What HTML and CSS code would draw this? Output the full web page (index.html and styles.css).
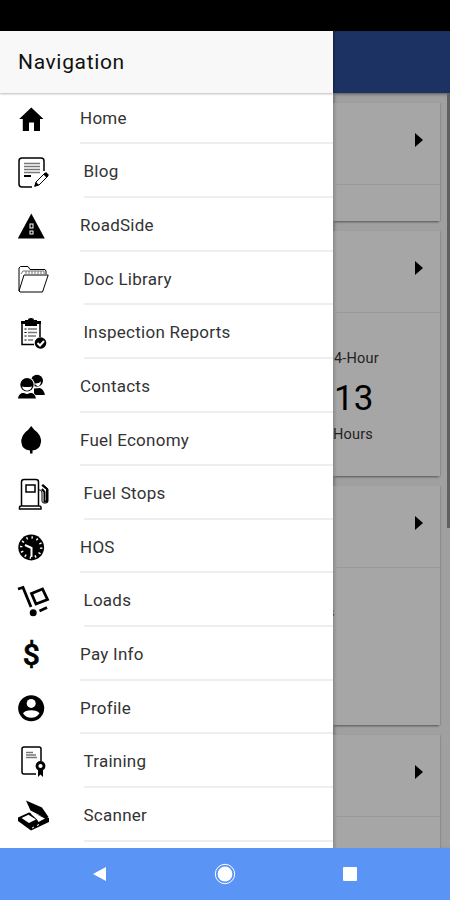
FILE: index.html
```html
<!DOCTYPE html>
<html lang="en">
<head>
    <meta charset="UTF-8" />
    <meta name="viewport" content="width=device-width, initial-scale=1" />
    <title>Navigation</title>
    <link rel="stylesheet" href="styles.css">
</head>
<body>
    <div class="status-bar"></div>

    <div class="screen">
        <nav class="drawer">
            <header class="drawer-header">Navigation</header>
            <ul class="menu">
                <li>
                    <svg viewBox="0 0 34 34"><path d="M15.300 6.500L27.500 18H24V30H18V21.500H13V30H6.800V18H3.200Z" /></svg>
                    <span>Home</span>
                </li>
                <li class="wide">
                    <svg viewBox="0 0 34 34">
                        <path class="mid" d="M16 33H6Q3 33 3 30V7Q3 4 6 4H25Q28 4 28 7V17" />
                        <path class="mid gray" d="M8 9.500H24M8 12.500H24M8 15.500H24M8 18.500H24" />
                        <path class="line" d="M8 22H15" />
                        <path class="thin" d="M19 32L20 28L29 19L32 22L23 31Z" />
                        <path d="M18 33L20 28L23 31ZM27.500 20.500L30 18L33 21L30.500 23.500Z" />
                    </svg>
                    <span>Blog</span>
                </li>
                <li>
                    <svg viewBox="0 0 34 34">
                        <path d="M15.300 5.500L28.800 30.500H1.800Z" />
                        <path class="cut" d="M13.500 15.500H17.500V20.500H13.500ZM13.500 22.500H17.500V26.500H13.500Z" />
                        <path class="line" d="M15.500 16.500V19.500M15.500 23.500V25.500" />
                    </svg>
                    <span>RoadSide</span>
                </li>
                <li class="wide">
                    <svg viewBox="0 0 34 34">
                        <path class="thin" d="M3 30V7L4.500 5.500H12L14 8.500H29L30 10V13M3 30L8 14H32.200L26.500 31H4Z" />
                        <path class="thin gray" d="M5 13L7 10H28V13M10 10V13M13 10V13M16 10V13M19 10V13M22 10V13M25 10V13" />
                    </svg>
                    <span>Doc Library</span>
                </li>
                <li class="wide">
                    <svg viewBox="0 0 34 34">
                        <path class="mid" d="M18 29.500H6V7.500H24V22" />
                        <path d="M5 6H9V5H12Q12 3 15 3T18 5H21V6H25V9H21V11H9V9H5Z" />
                        <path class="mid gray" d="M12 14H21M12 17.500H21M12 21H20M12 25H17" />
                        <path class="thin" d="M8.500 14H10.500M8.500 17.500H10.500M8.500 21H10.500M8.500 25H10.500" />
                        <circle cx="24.500" cy="28" r="5.800" />
                        <path class="line cut-line" d="M21.500 28L24 30.500L28 26" />
                    </svg>
                    <span>Inspection Reports</span>
                </li>
                <li>
                    <svg viewBox="0 0 34 34">
                        <circle cx="21" cy="11.800" r="6" />
                        <path class="cut" d="M18 14.500Q22.500 15 25 12.500Q24.500 17 21.500 17.300Z" />
                        <path d="M18 19.500L24 19Q28 20.500 28.800 26H18Z" />
                        <circle class="cut" cx="11" cy="15.700" r="7.700" />
                        <circle cx="11" cy="15.700" r="6.700" />
                        <path class="cut" d="M6 17.500Q11 18.500 16 17.500Q15 21.500 11 21.700Q7 21.500 6 17.500Z" />
                        <path class="cut-stroke" d="M1.300 30Q2.500 24 7 23.300L11 24.500L15 23.300Q19.500 24 20.500 30Z" />
                    </svg>
                    <span>Contacts</span>
                </li>
                <li>
                    <svg viewBox="0 0 34 34"><path d="M15.200 4Q18 8 21 10Q25.500 15 25 20Q24 28 16.500 28.500V31.500H14V28.500Q6 28 5.300 20Q5 15 9.500 10Q12.500 8 15.200 4Z" /></svg>
                    <span>Fuel Economy</span>
                </li>
                <li class="wide">
                    <svg viewBox="0 0 34 34">
                        <path class="mid" d="M5.500 30V6Q5.500 3.500 8 3.500H20Q22.500 3.500 22.500 6V30M3.500 33V31Q3.500 30 5 30H23Q25 30 25 31V33Z" />
                        <path class="mid" d="M10 9H19V16H10Z" />
                        <path class="thin" d="M22.500 14H24Q26 14 26 17V25Q26 27 28 27H30Q32 27 32 25V13L27 8.500" />
                        <path class="line" d="M26 9L31 13V25.500H28.500V16L26 13" />
                    </svg>
                    <span>Fuel Stops</span>
                </li>
                <li>
                    <svg viewBox="0 0 34 34">
                        <circle cx="15.200" cy="17.500" r="12.900" />
                        <circle class="ticks" cx="15.200" cy="17.500" r="10" />
                        <path class="line cut-line" d="M15.500 27V18L9 15" />
                    </svg>
                    <span>HOS</span>
                </li>
                <li class="wide">
                    <svg viewBox="0 0 34 34">
                        <path class="bold" d="M2 6L7 4.500L15 24" />
                        <path class="bold" d="M15.500 10.500L26.500 6L31.500 16.500L20 21Z" />
                        <path class="bold" d="M23.500 28L31 24.500" />
                        <circle cx="17.200" cy="29.700" r="3.500" />
                    </svg>
                    <span>Loads</span>
                </li>
                <li>
                    <svg viewBox="0 0 34 34"><text class="dollar" x="15.200" y="27.500">$</text></svg>
                    <span>Pay Info</span>
                </li>
                <li>
                    <svg viewBox="0 0 34 34">
                        <circle cx="15.200" cy="17.200" r="13" />
                        <circle class="cut" cx="15.200" cy="12.400" r="4.500" />
                        <path class="cut" d="M7 22.200Q9 19.200 15.200 19.200T23.500 22.200Q20.500 26.700 15.200 26.700T7 22.200Z" />
                    </svg>
                    <span>Profile</span>
                </li>
                <li class="wide">
                    <svg viewBox="0 0 34 34">
                        <path class="mid" d="M20 30H8Q6 30 6 28V5Q6 3 8 3H23Q25 3 25 5V17" />
                        <path class="mid gray" d="M10 8.500H17M10 11H20M10 13.500H21" />
                        <circle class="bold" cx="24.500" cy="22" r="3.500" />
                        <path d="M22 26H27V33L24.500 30.500L22 33Z" />
                    </svg>
                    <span>Training</span>
                </li>
                <li class="wide">
                    <svg viewBox="0 0 34 34">
                        <path d="M10 2.500L26 9.500L32.500 19L30 20.500L14.500 12.500Z" />
                        <path d="M2 19.500L13 14.500L33 20V24L15 32.500L2 23Z" />
                        <path class="cut" d="M5.500 20L12.500 16.700L20 21.500L13 25ZM14.500 15.500L17 14.500L29 20.500L22.500 24L21 21.500Z" />
                        <path class="thin cut-line" d="M16 30L18 29M21 27.500L23 26.500" />
                    </svg>
                    <span>Scanner</span>
                </li>
                <li class="wide"></li>
            </ul>
        </nav>

        <main class="page">
            <div class="toolbar"></div>
            <div class="content">
                <div class="cards">
                    <section class="card card-short">
                        <div class="card-head"><i class="arrow"></i></div>
                    </section>
                    <section class="card card-hours">
                        <div class="card-head"><i class="arrow"></i></div>
                        <div class="hours">
                            <div>4-Hour</div>
                            <div class="hours-value">13</div>
                            <div class="hours-unit">Hours</div>
                        </div>
                    </section>
                    <section class="card card-tall">
                        <div class="card-head"><i class="arrow"></i></div>
                        <div class="clipped">s</div>
                    </section>
                    <section class="card card-short">
                        <div class="card-head"><i class="arrow"></i></div>
                    </section>
                </div>
                <div class="scrollbar"></div>
            </div>
        </main>
    </div>

    <footer class="system-nav">
        <svg viewBox="0 0 16 16"><path d="M1 8L14 1V15Z" /></svg>
        <svg class="home-button" viewBox="0 0 22 22">
            <circle class="ring" cx="11" cy="11" r="9.700" />
            <circle cx="11" cy="11" r="7.400" />
        </svg>
        <svg viewBox="0 0 16 16"><rect x="1" y="1" width="14" height="14" rx="1" /></svg>
    </footer>
</body>
</html>
```
FILE: styles.css
```css
* {
    box-sizing: border-box;
}

body {
    display: flex;
    flex-direction: column;
    width: 450px;
    height: 900px;
    margin: 0;
    overflow: hidden;
    font-family: Roboto, sans-serif;
    color: #222;
}

.status-bar {
    height: 30.5px;
    flex: none;
    background: #000;
}

.screen {
    display: flex;
    flex: 1;
    min-height: 0;
}

/* Drawer */
.drawer {
    width: 333px;
    flex: none;
    overflow: hidden;
    background: #fff;
}

.drawer-header {
    height: 62.5px;
    padding-left: 18px;
    background: #f8f8f8;
    box-shadow: 0 1px 2px #bbb;
    font-size: 21px;
    font-weight: 400;
    line-height: 63px;
    letter-spacing: 0.65px;
    color: #111;
}

.menu {
    margin: -2.3px 0 0;
    padding: 0;
    list-style: none;
}

.menu li {
    display: flex;
    align-items: center;
    height: 53.65px;
    padding-left: 16px;
}

.menu svg {
    width: 34px;
    height: 34px;
    flex: none;
    margin-right: 30px;
    overflow: visible;
}

.menu .wide svg {
    margin-right: 33.5px;
}

.menu span {
    flex: 1;
    height: 100%;
    border-bottom: 2px solid #eee;
    font-size: 17px;
    line-height: 55px;
    letter-spacing: 0.25px;
    color: #333;
}

.line,
.thin,
.mid,
.bold {
    fill: none;
    stroke: #000;
    stroke-width: 2;
}

.thin {
    stroke-width: 1;
}

.mid {
    stroke-width: 1.5;
}

.bold {
    stroke-width: 2.8;
}

.gray {
    stroke: #777;
}

.cut {
    fill: #fff;
}

.cut-line {
    stroke: #fff;
}

.cut-stroke {
    stroke: #fff;
    stroke-width: 1;
}

.ticks {
    fill: none;
    stroke: #fff;
    stroke-width: 2.5;
    stroke-dasharray: 1.4 3.836;
}

.dollar {
    font: 500 30px Roboto, sans-serif;
    text-anchor: middle;
    stroke: #000;
    stroke-width: 0.6;
}

/* Dimmed page behind the drawer */
.page {
    display: flex;
    flex: 1;
    flex-direction: column;
    min-width: 0;
    overflow: hidden;
    background: #a0a0a0;
    box-shadow: inset 3px 0 3px -1px #777;
}

.toolbar {
    height: 62px;
    flex: none;
    background: #1c3262;
    box-shadow: 0 1px 3px #555, inset 3px 0 3px -2px #111f40;
}

.content {
    display: flex;
    justify-content: space-between;
}

.cards {
    width: 107px;
    padding-top: 10px;
}

.card {
    margin-bottom: 10px;
    background: linear-gradient(to right, #8c8c8c, #a6a6a6 4px);
    box-shadow: 0 2px 2px -1px #555, 1px 0 1px #929292;
}

.card-short {
    height: 118.5px;
}

.card-hours {
    height: 245px;
}

.card-tall {
    height: 238.5px;
}

.card-head {
    display: flex;
    align-items: center;
    justify-content: flex-end;
    height: 82px;
    padding: 0 17px 7px 0;
    border-bottom: 1px solid #999;
}

.arrow {
    border: 7px solid transparent;
    border-left: 8px solid #000;
    border-right: 0;
}

.hours {
    padding: 36px 0 0 1px;
    font-size: 14.5px;
    line-height: 20px;
    letter-spacing: 0.2px;
}

.hours-value {
    font-size: 35px;
    line-height: 60px;
    letter-spacing: 0;
    color: #000;
}

.hours-unit {
    margin: -4px 0 0 -1px;
}

.clipped {
    margin: 34px 0 0 -6px;
    font-size: 14px;
    line-height: 20px;
}

.scrollbar {
    width: 3px;
    height: 435px;
    background: #606060;
}

/* Android navigation */
.system-nav {
    display: flex;
    align-items: center;
    justify-content: space-between;
    height: 52px;
    flex: none;
    padding: 0 92px;
    background: #5a94f5;
}

.system-nav svg {
    width: 16px;
    height: 16px;
    fill: #fff;
}

.system-nav .home-button {
    width: 22px;
    height: 22px;
}

.system-nav .ring {
    fill: none;
    stroke: #fff;
    stroke-width: 1;
}
```
